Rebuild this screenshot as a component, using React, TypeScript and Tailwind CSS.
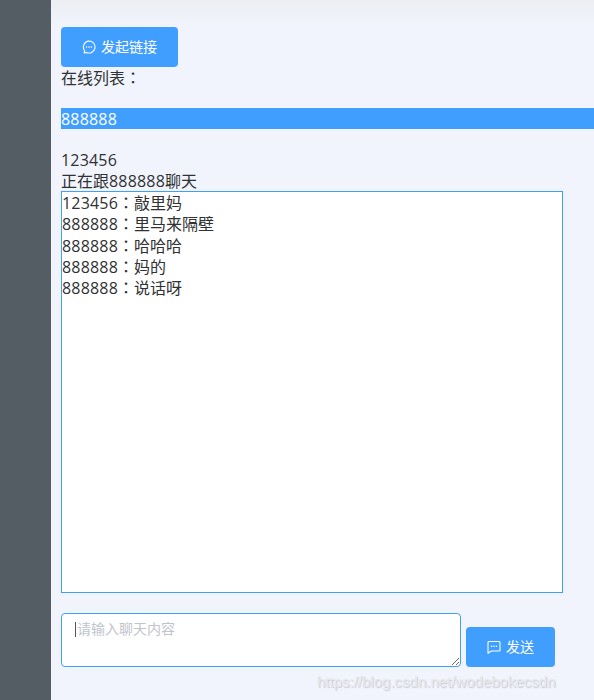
import React from 'react';

const FONT = "font-['Open_Sans','Noto_Sans_CJK_SC',sans-serif]";

const messages = [
  { from: '123456', text: '敲里妈' },
  { from: '888888', text: '里马来隔壁' },
  { from: '888888', text: '哈哈哈' },
  { from: '888888', text: '妈的' },
  { from: '888888', text: '说话呀' },
];

// digits run a touch wider in the reference than in Open Sans
function Num({ children }: { children: React.ReactNode }) {
  return <span className="tracking-[0.18px]">{children}</span>;
}

// centred full-width colon, the TC cut has it in the middle of the box
function Colon() {
  return <span className="font-['Noto_Sans_CJK_TC',sans-serif] leading-[0]">：</span>;
}

function ChatRoundIcon() {
  return (
    <svg width="14" height="14" viewBox="0 0 14 14" fill="none" className="shrink-0">
      <path d="M7 1a6 6 0 1 1-2.6 11.4L2.2 13l.4-2.4A6 6 0 0 1 7 1z" stroke="white" strokeWidth="1.1" strokeLinejoin="round" />
      <circle cx="4.6" cy="7" r=".8" fill="white" />
      <circle cx="7" cy="7" r=".8" fill="white" />
      <circle cx="9.4" cy="7" r=".8" fill="white" />
    </svg>
  );
}

function ChatSquareIcon() {
  return (
    <svg width="14" height="14" viewBox="0 0 14 14" fill="none" className="shrink-0">
      <path d="M2 1.5h10a1 1 0 0 1 1 1v7.5a1 1 0 0 1-1 1H4.5L1 13.2V2.5a1 1 0 0 1 1-1z" stroke="white" strokeWidth="1.1" strokeLinejoin="round" />
      <circle cx="4.6" cy="6.2" r=".8" fill="white" />
      <circle cx="7" cy="6.2" r=".8" fill="white" />
      <circle cx="9.4" cy="6.2" r=".8" fill="white" />
    </svg>
  );
}

export default function App() {
  return (
    <div className={`relative flex h-[700px] w-[594px] overflow-hidden bg-[#f1f4fc] text-[16px] leading-[21px] text-[#303133] ${FONT}`}>
      {/* Sidebar */}
      <div className="w-[51px] shrink-0 bg-[#545c64]" />

      {/* Main */}
      <div className="min-w-0 flex-1">
        <div className="h-[27px] bg-gradient-to-b from-[#eceef3] to-[#f1f4fc]" />
        <div className="pl-[10px]">
          <button className="flex h-[40px] w-[117px] items-center justify-center gap-[5px] rounded-[4px] bg-[#409eff] pb-[1px] text-[14px] text-white">
            <ChatRoundIcon />
            发起链接
          </button>
          <div className="mt-[1px]">在线列表<Colon /></div>

          <div className="mt-[19px] h-[21px] bg-[#409eff] pt-[1px] text-white"><Num>888888</Num></div>
          <div className="mt-[21px]"><Num>123456</Num></div>
          <div>正在跟<Num>888888</Num>聊天</div>

          {/* Chat log */}
          <div className="-mt-[1px] h-[402px] w-[502px] border border-[#409eff] bg-white pt-[1px]">
            {messages.map((m, i) => (
              <div key={i} className="h-[21.3px]">
                <Num>{m.from}</Num><Colon />{m.text}
              </div>
            ))}
          </div>

          {/* Input row */}
          <div className="mt-[20px] flex items-end gap-[5px]">
            <div className="relative h-[54px] w-[400px]">
              <textarea
                placeholder="请输入聊天内容"
                className="block h-[54px] w-[400px] resize-y rounded-[4px] border border-[#409eff] bg-white px-[15px] py-[4px] text-[14px] leading-[21px] outline-none placeholder:text-[#c0c4cc]"
              />
              <div className="absolute left-[14px] top-[9px] h-[15px] w-[1px] bg-[#555]" />
            </div>
            <button className="flex h-[40px] w-[89px] items-center justify-center gap-[5px] rounded-[4px] bg-[#409eff] pb-[1px] text-[14px] text-white">
              <ChatSquareIcon />
              发送
            </button>
          </div>
        </div>
      </div>

      {/* Watermark */}
      <div className="absolute left-[317px] top-[672px] font-['Liberation_Sans',sans-serif] text-[15px] leading-[20px] whitespace-nowrap text-[#e6e8ec] [text-shadow:1px_1px_1px_#c8cbd2]">
        https://blog.csdn.net/wodebokecsdn
      </div>
    </div>
  );
}
